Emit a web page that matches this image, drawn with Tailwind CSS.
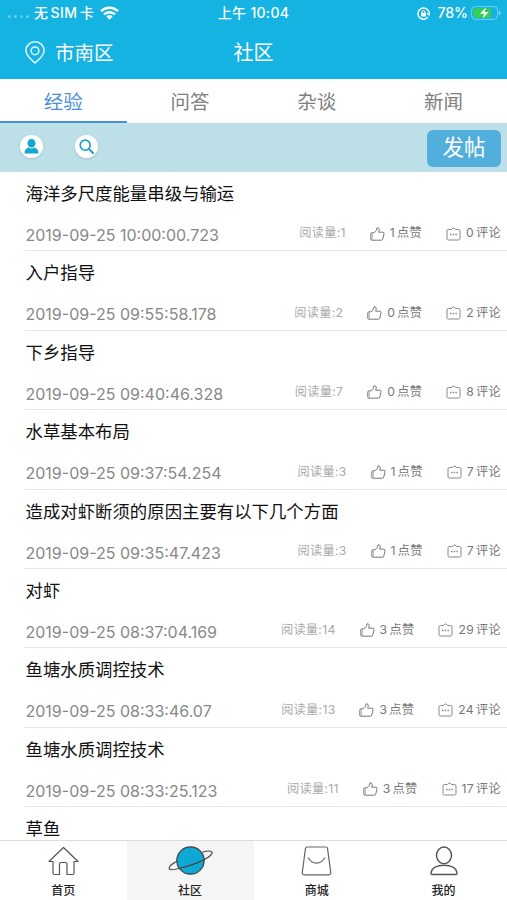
<!DOCTYPE html>
<html lang="zh-CN">
<head>
    <meta charset="UTF-8">
    <meta name="viewport" content="width=device-width, initial-scale=1.0">
    <title>社区</title>
    <script src="https://cdn.jsdelivr.net/npm/@tailwindcss/browser@4"></script>
    <style>
        body {
            font-family: Inter, 'Noto Sans CJK SC', sans-serif;
        }
    </style>
</head>
<body class="h-[900px] w-[507px] overflow-hidden flex flex-col bg-white text-black">
    <!-- Cabecera: barra de estado y título -->
    <header class="h-[79px] shrink-0 bg-[#14b3e2] text-white">
        <div class="h-[26px] grid grid-cols-3 items-center text-[14px] leading-none font-medium">
            <div class="flex items-center pl-[8px]">
                <div class="flex gap-[3px] w-[26px] pt-[7px]">
                    <i class="size-[3px] rounded-full bg-white/35"></i>
                    <i class="size-[3px] rounded-full bg-white/35"></i>
                    <i class="size-[3px] rounded-full bg-white/35"></i>
                    <i class="size-[3px] rounded-full bg-white/35"></i>
                </div>
                <span class="whitespace-nowrap">无<span class="mx-[2.5px] tracking-[0.4px]">SIM</span>卡</span>
                <svg class="ml-[6px] w-[19px] h-[14px]" viewBox="0 0 19 14" fill="none" stroke="#fff" stroke-width="2.5">
                    <path d="M1 5.2a12.2 12.2 0 0 1 17 0M4 8.4a7.9 7.9 0 0 1 11 0"/>
                    <path d="M9.5 13.7 6.4 10.5a4.5 4.5 0 0 1 6.2 0z" fill="#fff" stroke="none"/>
                </svg>
            </div>
            <div class="text-center whitespace-nowrap tracking-[0.3px]">上午 10:04</div>
            <div class="flex items-center justify-end pr-[6px]">
                <svg class="size-[13px] mr-[7px]" viewBox="0 0 13 13" fill="none" stroke="#fff" stroke-width="1.4">
                    <path d="M11.9 5A5.6 5.6 0 1 0 11 10M12.5 4.5l-.4 3.2-2-1.5"/>
                    <rect x="4" y="5.8" width="5" height="3.7" rx=".6" fill="#fff" stroke="none"/>
                    <path d="M5 6V5a1.5 1.5 0 0 1 3 0v1" stroke-width="1"/>
                </svg>
                <span>78%</span>
                <svg class="ml-[3px] w-[30px] h-[14px]" viewBox="0 0 30 14">
                    <rect x=".6" y=".6" width="26" height="12.8" rx="3.8" fill="none" stroke="#fff" stroke-opacity=".4"/>
                    <path d="M4.5 2.3H20v9.4H4.5a2.2 2.2 0 0 1-2.2-2.2v-5a2.2 2.2 0 0 1 2.2-2.2z" fill="#35cf55"/>
                    <path d="M15 1.3 9 7.8h4l-1.5 5L17.7 6h-4z" fill="#fff"/>
                    <path d="M27.9 4.7a2.4 2.4 0 0 1 0 4.6z" fill="#fff" fill-opacity=".5"/>
                </svg>
            </div>
        </div>
        <div class="h-[53px] grid grid-cols-3 items-center">
            <div class="flex items-center pl-[25px] text-[19.5px]">
                <svg class="w-[20px] h-[23px] mr-[10px]" viewBox="0 0 20 23" fill="none" stroke="#fff" stroke-opacity=".9" stroke-width="1.5">
                    <path d="M10 22C6 18.5.9 14.5.9 9.7a9.1 8.9 0 0 1 18.2 0C19.1 14.5 14 18.5 10 22z"/>
                    <circle cx="10" cy="9.8" r="3.9"/>
                </svg>
                <span class="pt-[2px]">市南区</span>
            </div>
            <h1 class="text-center text-[20px] pt-[1px]">社区</h1>
        </div>
    </header>

    <!-- Pestañas -->
    <nav class="h-[44px] shrink-0 grid grid-cols-4 text-center text-[19.5px] leading-[46px] text-[#808080]">
        <div class="h-[44px] border-b-2 border-[#4a90d9] text-[#4a90d9]">经验</div>
        <div>问答</div>
        <div>杂谈</div>
        <div>新闻</div>
    </nav>

    <!-- Barra de acciones -->
    <div class="h-[49px] shrink-0 flex items-center bg-[#bcdfe8] pl-[20px] pr-[6px] pb-[2px]">
        <div class="size-[23px] rounded-full bg-white shadow-sm flex items-center justify-center">
            <svg class="size-[15px]" viewBox="0 0 15 15" fill="#12a7d2">
                <ellipse cx="7.5" cy="4.3" rx="4" ry="4.3"/>
                <path d="M.5 14.5c0-3.5 1.7-5.2 4.3-5.9a5 5 0 0 0 5.4 0c2.6.7 4.3 2.4 4.3 5.900z"/>
            </svg>
        </div>
        <div class="size-[23px] ml-[32px] rounded-full bg-white shadow-sm flex items-center justify-center">
            <svg class="size-[15px]" viewBox="0 0 15 15" fill="none" stroke="#1ba3cb" stroke-width="1.7">
                <circle cx="6.2" cy="6.2" r="5"/>
                <path d="m10 10 4 4" stroke-width="2.2" stroke-linecap="round"/>
            </svg>
        </div>
        <button class="ml-auto mt-[3px] w-[74px] h-[37px] rounded-[6px] bg-[#52aedb] text-white text-[21.5px] leading-none">发帖</button>
    </div>

    <!-- Lista de publicaciones -->
    <main id="postList" class="flex-1 min-h-0 overflow-hidden"></main>

    <!-- Navegación inferior -->
    <footer class="h-[60px] shrink-0 grid grid-cols-4 border-t border-[#dcdcdc] bg-white text-[12px] leading-none font-medium text-[#222]">
        <div class="flex flex-col items-center pt-[5px] gap-[9px]">
            <svg class="w-[31px] h-[30px]" viewBox="0 0 31 30" fill="none" stroke="#555" stroke-width="1.2" stroke-linejoin="round">
                <path d="M15.5 1.5 1 15.5h4v11.5a1.5 1.5 0 0 0 1.5 1.5h5V18a1.5 1.5 0 0 1 1.5-1.5h4.5A1.5 1.5 0 0 1 19 18v10.5h5.5A1.5 1.5 0 0 0 26 27V15.5h4z"/>
            </svg>
            <span>首页</span>
        </div>
        <div class="flex flex-col items-center pt-[5px] gap-[9px] bg-[#f5f5f5]">
            <svg class="w-[46px] h-[30px]" viewBox="0 0 46 30" fill="none" stroke="#444" stroke-width="1.2">
                <circle cx="23.5" cy="14.5" r="13.7" fill="#0ea9d2"/>
                <path d="M35.5 6.2c5-1.6 9-1.6 9.5 0 .8 2.500-5.500 7.200-16.300 11.200S3.400 25.200 2.400 23C1.600 21.200 4.500 18 10.400 15"/>
            </svg>
            <span>社区</span>
        </div>
        <div class="flex flex-col items-center pt-[5px] gap-[9px]">
            <svg class="w-[31px] h-[30px]" viewBox="0 0 31 30" fill="none" stroke="#666" stroke-width="1.2">
                <path d="M6 1h19a1.5 1.5 0 0 1 1.5 1.3l3.3 24.5a1.8 1.8 0 0 1-1.8 2H3a1.8 1.8 0 0 1-1.8-2L4.5 2.3A1.5 1.5 0 0 1 6 1z"/>
                <path d="M7 11.5c4.5 7.5 12.5 7.5 17 0"/>
            </svg>
            <span>商城</span>
        </div>
        <div class="flex flex-col items-center pt-[5px] gap-[9px]">
            <svg class="w-[28px] h-[30px]" viewBox="0 0 28 30" fill="none" stroke="#555" stroke-width="1.4">
                <ellipse cx="14" cy="9.3" rx="7.5" ry="8.3"/>
                <path d="M1 27c.6-5 6-7.8 13-7.8S26.4 22 27 27a1.3 1.3 0 0 1-1.3 1.5H2.3A1.3 1.3 0 0 1 1 27z"/>
            </svg>
            <span>我的</span>
        </div>
    </footer>

    <script>
        const posts = [
            { title: '海洋多尺度能量串级与输运', date: '2019-09-25 10:00:00.723', reads: 1, likes: 1, comments: 0 },
            { title: '入户指导', date: '2019-09-25 09:55:58.178', reads: 2, likes: 0, comments: 2 },
            { title: '下乡指导', date: '2019-09-25 09:40:46.328', reads: 7, likes: 0, comments: 8 },
            { title: '水草基本布局', date: '2019-09-25 09:37:54.254', reads: 3, likes: 1, comments: 7 },
            { title: '造成对虾断须的原因主要有以下几个方面', date: '2019-09-25 09:35:47.423', reads: 3, likes: 1, comments: 7 },
            { title: '对虾', date: '2019-09-25 08:37:04.169', reads: 14, likes: 3, comments: 29 },
            { title: '鱼塘水质调控技术', date: '2019-09-25 08:33:46.07', reads: 13, likes: 3, comments: 24 },
            { title: '鱼塘水质调控技术', date: '2019-09-25 08:33:25.123', reads: 11, likes: 3, comments: 17 },
            { title: '草鱼' },
        ];

        const likeIcon = `
            <svg class="w-[15px] h-[14px] mr-[5px]" viewBox="0 0 15 14" fill="none" stroke="#777" stroke-linejoin="round">
                <path d="M4 5.8 6.4 3.5 7 .9c1.6-.5 2.5.8 2.2 2.2l-.5 2.1h4a1.3 1.3 0 0 1 1.3 1.6l-1.2 5.2a1.5 1.5 0 0 1-1.4 1.2H4L2 13.200A1.200 1.200 0 0 1 .8 12V7A1.200 1.200 0 0 1 2 5.800z"/>
                <path d="M2.300 6.500v6" stroke-opacity=".6"/>
            </svg>`;
        const commentIcon = `
            <svg class="w-[15px] h-[14px] mr-[5px]" viewBox="0 0 15 14" fill="none" stroke="#888">
                <path d="M2.500 2.500h2.700L7.500.8l2.300 1.700h2.700A1.500 1.500 0 0 1 14 4v7.500a1.500 1.500 0 0 1-1.500 1.500h-10A1.500 1.500 0 0 1 1 11.500V4a1.500 1.500 0 0 1 1.500-1.500z"/>
                <path d="M4 7.500h1.500m1.200 0h1.500m1.200 0h1.500" stroke-width="1.300"/>
            </svg>`;

        // Fecha y contadores de una publicación
        const meta = post => `
            <div class="mt-[16px] pr-[6px] flex items-center h-[24px]">
                <time class="pl-[0.5px] text-[16px] text-[#888]">${post.date}</time>
                <div class="ml-auto -mt-[3px] flex items-center text-[12.2px] leading-none tracking-[0.3px] text-[#777]">
                    <span class="mr-[24px] text-[#aaa]">阅读量:${post.reads}</span>
                    ${likeIcon}
                    <span class="mr-[24px]">${post.likes}<span class="ml-[2px]">点赞</span></span>
                    ${commentIcon}
                    <span>${post.comments}<span class="ml-[2px]">评论</span></span>
                </div>
            </div>`;

        // Genera una fila por publicación
        document.getElementById('postList').innerHTML = posts.map(post => `
            <article class="h-[79.4px] ml-[25px] border-b border-[#e6e6e6] flex flex-col">
                <h2 class="pt-[9px] pl-[0.5px] text-[17.4px] leading-[26px] text-[#111]">${post.title}</h2>
                ${post.date ? meta(post) : ''}
            </article>`).join('');
    </script>
</body>
</html>
